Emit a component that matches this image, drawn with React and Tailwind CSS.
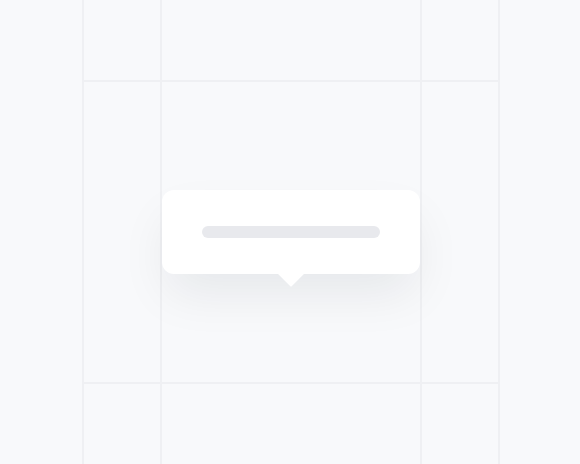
import React from "react";

function Cell({ children }) {
  return <div className="bg-[#f8f9fb]">{children}</div>;
}

function TooltipSkeleton() {
  return (
    <div className="relative z-10 flex h-[84px] w-[258px] items-center justify-center rounded-xl bg-white shadow-[0_24px_50px_-6px_rgba(15,23,42,0.08)]">
      <div className="h-3 w-[178px] rounded-full bg-[#e8e9ed]"></div>
      {/* arrow */}
      <div className="absolute -bottom-[9px] left-1/2 h-[19px] w-[19px] -translate-x-1/2 rotate-45 rounded-br-[1px] bg-white"></div>
    </div>
  );
}

export default function App() {
  const rows = [0, 1, 2];
  const cols = [0, 1, 2];

  return (
    <div className="flex h-[464px] w-full gap-[2px] bg-[#eff0f3]">
      <div className="w-[82px] bg-[#f8f9fb]"></div>
      <div className="grid w-[414px] grid-cols-[76px_258px_76px] grid-rows-[80px_300px_1fr] gap-[2px]">
        {rows.map((r) =>
          cols.map((c) =>
            r === 1 && c === 1 ? (
              <div
                key={`${r}-${c}`}
                className="relative z-10 flex items-center justify-center bg-[#f8f9fb]"
              >
                <TooltipSkeleton />
              </div>
            ) : (
              <Cell key={`${r}-${c}`} />
            )
          )
        )}
      </div>
      <div className="flex-1 bg-[#f8f9fb]"></div>
    </div>
  );
}
